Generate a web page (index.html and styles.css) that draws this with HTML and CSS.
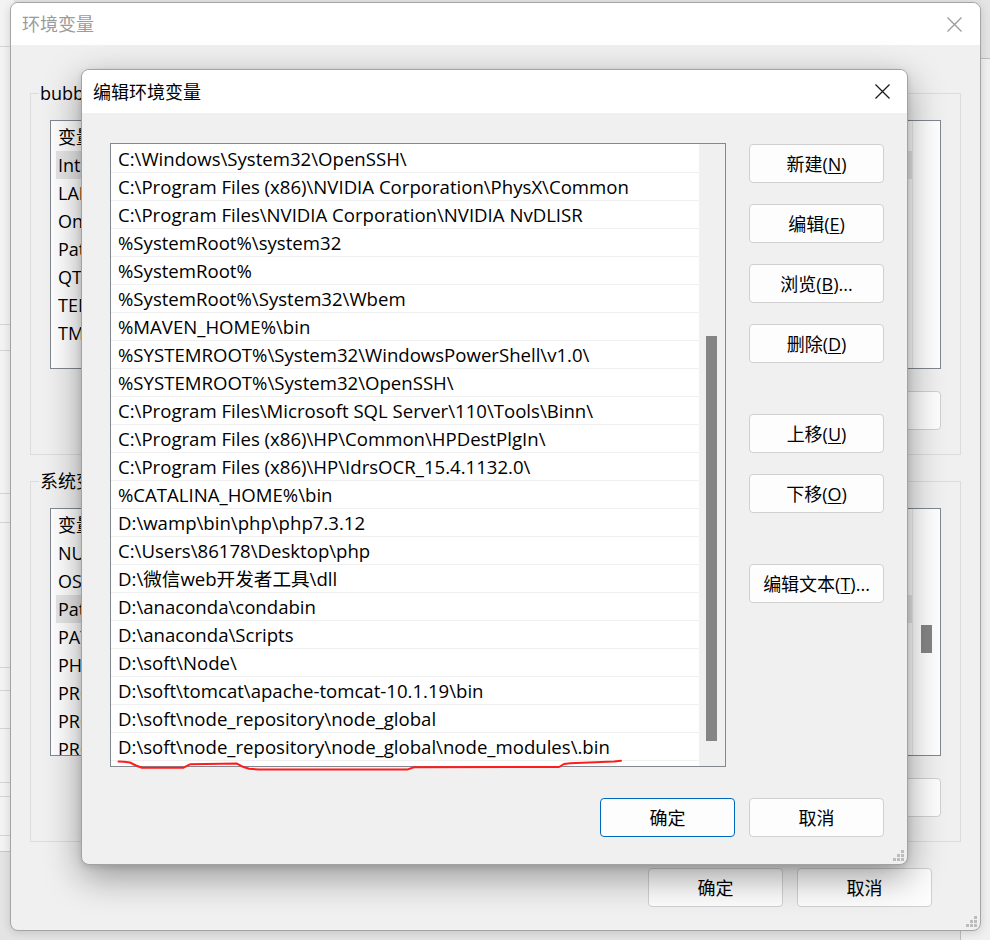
FILE: index.html
```html
<!DOCTYPE html>
<html lang="zh-CN">
<head>
<meta charset="utf-8">
<title>编辑环境变量</title>
<link rel="stylesheet" href="styles.css">
</head>
<body>
<div class="desktop">
  <div class="back-left"></div>
  <div class="back-right"></div>

  <section class="window outer">
    <header class="titlebar">
      <span class="title">环境变量</span>
      <svg class="close" width="15" height="15" viewBox="0 0 15 15"><path d="M0.5 0.5 L14.5 14.5 M14.5 0.5 L0.5 14.5"/></svg>
    </header>
    <div class="outer-body">
      <fieldset class="group">
        <legend>bubble 的用户变量(<u>U</u>)</legend>
        <div class="vlist tall">
          <div class="vrows">
            <div class="vhead"><span class="c1">变量</span></div>
            <div class="vrow sel"><span class="c1">IntelliJ IDEA</span></div>
            <div class="vrow"><span class="c1">LANG</span></div>
            <div class="vrow"><span class="c1">OneDrive</span></div>
            <div class="vrow"><span class="c1">Path</span></div>
            <div class="vrow"><span class="c1">QT_QPA</span></div>
            <div class="vrow"><span class="c1">TEMP</span></div>
            <div class="vrow"><span class="c1">TMP</span></div>
          </div>
          <div class="vscroll"></div>
        </div>
        <div class="actions">
          <button class="btn"></button>
        </div>
      </fieldset>

      <fieldset class="group second">
        <legend>系统变量(<u>S</u>)</legend>
        <div class="vlist">
          <div class="vrows">
            <div class="vhead"><span class="c1">变量</span></div>
            <div class="vrow"><span class="c1">NUMBER</span></div>
            <div class="vrow"><span class="c1">OS</span></div>
            <div class="vrow sel"><span class="c1">Path</span></div>
            <div class="vrow"><span class="c1">PATHEXT</span></div>
            <div class="vrow"><span class="c1">PHP</span></div>
            <div class="vrow"><span class="c1">PROCESSOR</span></div>
            <div class="vrow"><span class="c1">PROCESSOR</span></div>
            <div class="vrow"><span class="c1">PROCESSOR</span></div>
          </div>
          <div class="vscroll"><div class="vthumb"></div></div>
        </div>
        <div class="actions">
          <button class="btn"></button>
        </div>
      </fieldset>

      <div class="outer-actions">
        <button class="btn">确定</button>
        <button class="btn">取消</button>
      </div>
    </div>
    <svg class="grip" width="12" height="12" viewBox="0 0 12 12">
      <rect x="8" y="0" width="3" height="3"/><rect x="4" y="4" width="3" height="3"/><rect x="8" y="4" width="3" height="3"/>
      <rect x="0" y="8" width="3" height="3"/><rect x="4" y="8" width="3" height="3"/><rect x="8" y="8" width="3" height="3"/>
    </svg>
  </section>

  <section class="window dialog">
    <header class="titlebar">
      <span class="title">编辑环境变量</span>
      <svg class="close" width="15" height="15" viewBox="0 0 15 15"><path d="M0.5 0.5 L14.5 14.5 M14.5 0.5 L0.5 14.5"/></svg>
    </header>
    <div class="dlg-body">
      <div class="dlg-main">
        <div class="plist">
          <div class="prows">
            <div class="prow">C:\Windows\System32\OpenSSH\</div>
            <div class="prow">C:\Program Files (x86)\NVIDIA Corporation\PhysX\Common</div>
            <div class="prow">C:\Program Files\NVIDIA Corporation\NVIDIA NvDLISR</div>
            <div class="prow">%SystemRoot%\system32</div>
            <div class="prow">%SystemRoot%</div>
            <div class="prow">%SystemRoot%\System32\Wbem</div>
            <div class="prow">%MAVEN_HOME%\bin</div>
            <div class="prow">%SYSTEMROOT%\System32\WindowsPowerShell\v1.0\</div>
            <div class="prow">%SYSTEMROOT%\System32\OpenSSH\</div>
            <div class="prow">C:\Program Files\Microsoft SQL Server\110\Tools\Binn\</div>
            <div class="prow">C:\Program Files (x86)\HP\Common\HPDestPlgIn\</div>
            <div class="prow">C:\Program Files (x86)\HP\IdrsOCR_15.4.1132.0\</div>
            <div class="prow">%CATALINA_HOME%\bin</div>
            <div class="prow">D:\wamp\bin\php\php7.3.12</div>
            <div class="prow">C:\Users\86178\Desktop\php</div>
            <div class="prow">D:\微信web开发者工具\dll</div>
            <div class="prow">D:\anaconda\condabin</div>
            <div class="prow">D:\anaconda\Scripts</div>
            <div class="prow">D:\soft\Node\</div>
            <div class="prow">D:\soft\tomcat\apache-tomcat-10.1.19\bin</div>
            <div class="prow">D:\soft\node_repository\node_global</div>
            <div class="prow">D:\soft\node_repository\node_global\node_modules\.bin</div>
          </div>
          <div class="pscroll"><div class="pthumb"></div></div>
        </div>
        <div class="side">
          <button class="btn">新建(<u>N</u>)</button>
          <button class="btn">编辑(<u>E</u>)</button>
          <button class="btn">浏览(<u>B</u>)...</button>
          <button class="btn">删除(<u>D</u>)</button>
          <button class="btn push">上移(<u>U</u>)</button>
          <button class="btn">下移(<u>O</u>)</button>
          <button class="btn push">编辑文本(<u>T</u>)...</button>
        </div>
      </div>
      <div class="dlg-actions">
        <button class="btn default">确定</button>
        <button class="btn">取消</button>
      </div>
    </div>
    <svg class="redline" width="825" height="794" viewBox="82 70 825 794">
      <polyline points="118.5,761.5 124,761.8 130,762.5 136,765.5 142,767.8 183,767.8 190,764.3 237,763.6 243,766.8 249,768.8 259,769.6 407,769.6 414,767.3 559,767 564,764 570,763.2 614,761.5 621,760.8"/>
    </svg>
    <svg class="grip" width="12" height="12" viewBox="0 0 12 12">
      <rect x="8" y="0" width="3" height="3"/><rect x="4" y="4" width="3" height="3"/><rect x="8" y="4" width="3" height="3"/>
      <rect x="0" y="8" width="3" height="3"/><rect x="4" y="8" width="3" height="3"/><rect x="8" y="8" width="3" height="3"/>
    </svg>
  </section>
</div>
</body>
</html>
```

FILE: styles.css
```css
* { box-sizing: border-box; }

html, body {
  margin: 0;
  padding: 0;
}

body {
  width: 990px;
  height: 940px;
  overflow: hidden;
  background: #e4e4e4;
  font-family: "Segoe UI", "Open Sans", "Noto Sans CJK SC", sans-serif;
  font-size: 18px;
  color: #000;
}

.desktop {
  position: relative;
  width: 990px;
  height: 940px;
  overflow: hidden;
}

/* windows behind */
.back-left {
  position: absolute;
  left: 0;
  top: 0;
  width: 14px;
  height: 852px;
  background:
    linear-gradient(#d4d4d4, #d4d4d4) 0 46px / 100% 1px no-repeat,
    linear-gradient(#d4d4d4, #d4d4d4) 0 324px / 100% 1px no-repeat,
    linear-gradient(#d4d4d4, #d4d4d4) 0 350px / 100% 1px no-repeat,
    linear-gradient(#d4d4d4, #d4d4d4) 0 493px / 100% 1px no-repeat,
    linear-gradient(#d4d4d4, #d4d4d4) 0 522px / 100% 1px no-repeat,
    linear-gradient(#d4d4d4, #d4d4d4) 0 667px / 100% 1px no-repeat,
    linear-gradient(#d4d4d4, #d4d4d4) 0 690px / 100% 1px no-repeat,
    linear-gradient(#d4d4d4, #d4d4d4) 0 728px / 100% 1px no-repeat,
    linear-gradient(#d4d4d4, #d4d4d4) 0 782px / 100% 1px no-repeat,
    linear-gradient(#d4d4d4, #d4d4d4) 0 796px / 100% 1px no-repeat,
    linear-gradient(#d4d4d4, #d4d4d4) 0 835px / 100% 1px no-repeat,
    #f3f3f3;
  border-bottom: 1px solid #c8c8c8;
}

.back-right {
  position: absolute;
  left: 960px;
  top: 58px;
  width: 60px;
  height: 900px;
  background: #f0f0f0;
  border: 1px solid #bdbdbd;
  border-radius: 8px;
}

/* shared window chrome */
.window {
  position: absolute;
  display: flex;
  flex-direction: column;
  background: #f0f0f0;
  border-radius: 8px;
  overflow: hidden;
}

.titlebar {
  flex: none;
  display: flex;
  align-items: center;
  justify-content: space-between;
  background: #fff;
}

.title {
  font-size: 18px;
  line-height: 24px;
}

.close path {
  fill: none;
  stroke-width: 1.25;
}

.grip {
  position: absolute;
  right: 2px;
  bottom: 2px;
}

.grip rect {
  fill: #bcbcbc;
}

/* buttons */
.btn {
  flex: none;
  width: 135px;
  height: 39px;
  margin: 0;
  padding: 0;
  border: 1px solid #d0d0d0;
  border-radius: 4px;
  background: #fdfdfd;
  font: inherit;
  font-size: 18px;
  line-height: 24px;
  color: #000;
  display: flex;
  align-items: center;
  justify-content: center;
  white-space: nowrap;
}

.btn u {
  text-underline-offset: 2px;
}

.btn.default {
  border-color: #0067c0;
}

/* ---------- outer window ---------- */
.outer {
  left: 10px;
  top: 2px;
  width: 971px;
  height: 929px;
  border: 1px solid #a4a4a4;
  box-shadow: 0 2px 10px rgba(0, 0, 0, 0.14);
}

.outer .titlebar {
  height: 42px;
  padding: 0 18px 0 11px;
}

.outer .title {
  color: #9b9b9b;
}

.outer .close path {
  stroke: #9a9a9a;
}

.outer-body {
  flex: 1;
  display: flex;
  flex-direction: column;
  padding: 0 19px;
}

.group {
  margin: 36px 0 0;
  padding: 15px 19px 24px 19px;
  border: 1px solid #dcdcdc;
  min-width: 0;
}

.group.second {
  margin-top: 14px;
}

.group legend {
  max-width: 52px;
  overflow: hidden;
  margin-left: -11px;
  padding: 0 1px;
  font-size: 18px;
  line-height: 24px;
  white-space: nowrap;
}

.vlist {
  display: flex;
  height: 248px;
  border: 1px solid #828790;
  background: #fff;
}

.vlist.tall {
  height: 249px;
}

.vrows {
  flex: 1;
  min-width: 0;
  overflow: hidden;
}

.vhead {
  display: flex;
  align-items: center;
  height: 30px;
  padding-left: 7px;
}

.vrow {
  display: flex;
  align-items: center;
  height: 28px;
  margin-left: 5px;
  padding-left: 2px;
}

.vrow.sel {
  background: #e6e6e6;
}

.c1 {
  flex: none;
  width: 54px;
  overflow: hidden;
  white-space: nowrap;
}

.vscroll {
  flex: none;
  width: 28px;
  border-left: 1px solid #ececec;
}

.vthumb {
  width: 11px;
  height: 28px;
  margin: 116px 0 0 8px;
  background: #858585;
}

.actions {
  display: flex;
  justify-content: flex-end;
  gap: 14px;
  margin-top: 22px;
}

.outer-actions {
  display: flex;
  justify-content: flex-end;
  gap: 14px;
  margin-top: 26px;
  padding-right: 29px;
}

/* ---------- edit dialog ---------- */
.dialog {
  left: 81px;
  top: 69px;
  width: 827px;
  height: 796px;
  border: 1px solid #a2a2a2;
  box-shadow: 0 12px 36px rgba(0, 0, 0, 0.38), 0 2px 6px rgba(0, 0, 0, 0.12);
}

.dialog .titlebar {
  height: 43px;
  padding: 0 17px 0 11px;
}

.dialog .close path {
  stroke: #1a1a1a;
}

.dlg-body {
  flex: 1;
  display: flex;
  flex-direction: column;
  padding: 30px 23px 0 28px;
}

.dlg-main {
  display: flex;
  align-items: flex-start;
}

.plist {
  flex: none;
  display: flex;
  width: 616px;
  height: 624px;
  border: 1px solid #828790;
  background: #fff;
}

.prows {
  flex: 1;
  min-width: 0;
  padding-top: 1px;
  overflow: hidden;
}

.prow {
  height: 28px;
  line-height: 28px;
  padding-left: 7px;
  border-bottom: 1px solid #f0f0f0;
  font-size: 18.6px;
  white-space: nowrap;
}

.pscroll {
  flex: none;
  width: 26px;
  background: #f0f0f0;
}

.pthumb {
  width: 11px;
  height: 405px;
  margin: 192px 0 0 7px;
  background: #858585;
}

.side {
  flex: none;
  display: flex;
  flex-direction: column;
  gap: 21px;
  margin: 1px 0 0 23px;
}

.side .push {
  margin-top: 30px;
}

.dlg-actions {
  display: flex;
  justify-content: flex-end;
  gap: 14px;
  margin-top: 31px;
}

.redline {
  position: absolute;
  left: 0;
  top: 0;
  pointer-events: none;
}

.redline polyline {
  fill: none;
  stroke: #ff1c1c;
  stroke-width: 2;
  stroke-linejoin: round;
  stroke-linecap: round;
}
```
